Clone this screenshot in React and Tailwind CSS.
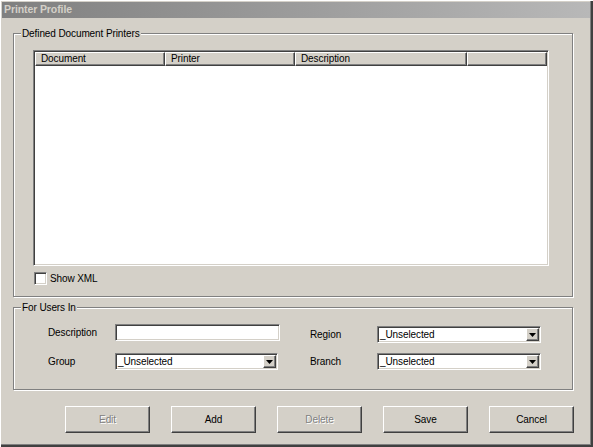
import React from 'react';

const sunken =
  'border border-t-[#808080] border-l-[#808080] border-r-white border-b-white shadow-[inset_1px_1px_0_#404040,inset_-1px_-1px_0_#d4d0c8]';
const raised =
  'border border-t-white border-l-white border-r-[#404040] border-b-[#404040] shadow-[inset_-1px_-1px_0_#808080]';

function GroupBox({ label, className, children }) {
  return (
    <div
      className={`border border-[#808080] shadow-[inset_1px_1px_0_#fff,1px_1px_0_#fff] ${className}`}
    >
      <div className="-mt-[7px] ml-[7px] w-fit px-[1px] bg-[#d4d0c8] leading-[13px] text-[#000]">
        {label}
      </div>
      {children}
    </div>
  );
}

function ComboBox({ value, className }) {
  return (
    <div className={`flex h-[17px] bg-white ${sunken} ${className}`}>
      <div className="flex-1 pl-[2px] leading-[15px] text-black">{value}</div>
      <div className={`w-[13px] h-[13px] mt-[1px] mr-[1px] bg-[#d4d0c8] flex items-center justify-center ${raised}`}>
        <svg width="7" height="4" viewBox="0 0 7 4">
          <path d="M0 0h7L3.5 4z" fill="#000" />
        </svg>
      </div>
    </div>
  );
}

function Button({ label, disabled }) {
  return (
    <button
      className={`w-[85px] h-[27px] bg-[#d4d0c8] ${raised} ${
        disabled ? 'text-[#808080] [text-shadow:1px_1px_0_#fff]' : 'text-black'
      }`}
    >
      {label}
    </button>
  );
}

export default function App() {
  const columns = [
    { name: 'Document', w: 'w-[130px]' },
    { name: 'Printer', w: 'w-[130px]' },
    { name: 'Description', w: 'w-[172px]' },
    { name: '', w: 'w-[80px]' },
  ];

  return (
    <div
      className="w-[593px] h-[447px] bg-[#d4d0c8] flex flex-col overflow-hidden text-[10px] tracking-[-0.1px] text-black shadow-[inset_1px_1px_0_#fff,inset_-1px_-1px_0_#404040,inset_-2px_-2px_0_#404040,inset_-3px_-3px_0_#808080]"
      style={{ fontFamily: '"Liberation Sans", Arial, sans-serif' }}
    >
      <div className="mx-[2px] mr-[3px] mt-[2px] h-[16px] bg-gradient-to-r from-[#808080] to-[#b8b8b8] pl-[2px] leading-[15px] text-[10.5px] font-bold text-[#d4d0c8]">
        Printer Profile
      </div>

      <div className="pl-[13px] pt-[15px]">
        <GroupBox label="Defined Document Printers" className="w-[560px] h-[264px]">
          <div className={`ml-[19px] mt-[10px] w-[516px] h-[216px] bg-white ${sunken}`}>
            <div className="flex h-[14px] bg-[#d4d0c8] m-[1px]">
              {columns.map((c, i) => (
                <div
                  key={i}
                  className={`${c.w} ${i === 3 ? 'flex-1' : ''} h-[14px] pl-[5px] leading-[12px] ${raised} whitespace-nowrap`}
                >
                  {c.name}
                </div>
              ))}
            </div>
          </div>
          <div className="flex items-center ml-[20px] mt-[6px]">
            <div className={`w-[13px] h-[13px] bg-white ${sunken}`} />
            <span className="ml-[3px] leading-[13px]">Show XML</span>
          </div>
        </GroupBox>

        <GroupBox label="For Users In" className="mt-[10px] w-[560px] h-[83px]">
          <div className="flex">
            <div className="flex flex-col mt-[10px] ml-[34px]">
              <div className="flex items-center h-[17px]">
                <span className="w-[67px]">Description</span>
                <div className={`w-[165px] h-[17px] bg-white ${sunken}`} />
              </div>
              <div className="flex items-center h-[17px] mt-[12px]">
                <span className="w-[67px]">Group</span>
                <ComboBox value="_Unselected" className="w-[163px]" />
              </div>
            </div>
            <div className="flex flex-col mt-[12px] ml-[30px]">
              <div className="flex items-center h-[17px]">
                <span className="w-[67px]">Region</span>
                <ComboBox value="_Unselected" className="w-[164px]" />
              </div>
              <div className="flex items-center h-[17px] mt-[10px]">
                <span className="w-[67px]">Branch</span>
                <ComboBox value="_Unselected" className="w-[164px]" />
              </div>
            </div>
          </div>
        </GroupBox>

        <div className="flex justify-end gap-[21px] w-[561px] mt-[16px]">
          <Button label="Edit" disabled />
          <Button label="Add" />
          <Button label="Delete" disabled />
          <Button label="Save" />
          <Button label="Cancel" />
        </div>
      </div>
    </div>
  );
}
